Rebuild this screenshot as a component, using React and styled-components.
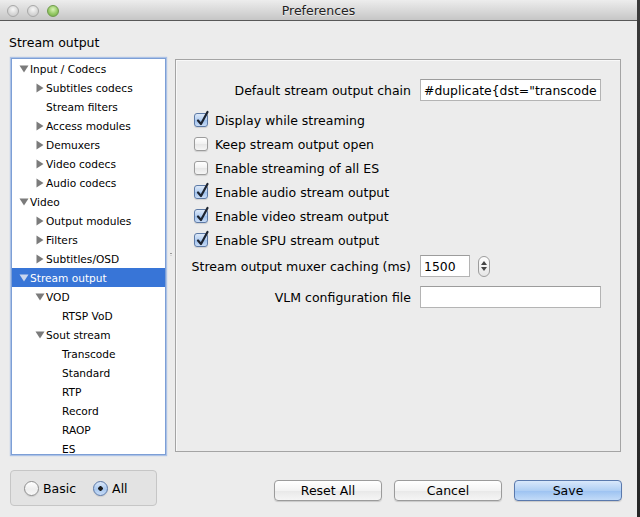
import styled, { createGlobalStyle } from 'styled-components';

const GlobalStyle = createGlobalStyle`
  html, body {
    margin: 0;
    padding: 0;
    background: #2f2f2f;
  }
  body {
    font-family: "DejaVu Sans", "Liberation Sans", sans-serif;
    color: #000;
  }
  * {
    box-sizing: border-box;
  }
`;

const Screen = styled.div`
  width: 640px;
  height: 517px;
  display: flex;
  overflow: hidden;
  background: #333;
`;

const Window = styled.div`
  width: 637px;
  height: 517px;
  flex: none;
  display: flex;
  flex-direction: column;
  background: #ececec;
`;

const TitleBar = styled.div`
  height: 21px;
  flex: none;
  display: grid;
  grid-template-columns: 1fr auto 1fr;
  align-items: center;
  background: linear-gradient(#ededed, #d6d6d6 60%, #c6c6c6);
  border-bottom: 1px solid #585858;
`;

const Lights = styled.div`
  display: flex;
  gap: 8px;
  padding-left: 7px;
  padding-top: 1px;
`;

const Light = styled.span`
  width: 12px;
  height: 12px;
  border-radius: 50%;
  border: 1px solid ${(p) => (p.$green ? '#6f9a4c' : '#a8a8a8')};
  background: ${(p) =>
    p.$green
      ? 'radial-gradient(circle at 50% 35%, #d8f3b5, #95c965 55%, #6ea843)'
      : 'radial-gradient(circle at 50% 35%, #f7f7f7, #d8d8d8 55%, #c4c4c4)'};
`;

const Title = styled.div`
  font-size: 12.5px;
  color: #222;
  text-shadow: 0 1px 0 rgba(255, 255, 255, 0.6);
`;

const Body = styled.div`
  flex: 1;
  display: flex;
  flex-direction: column;
`;

const Heading = styled.div`
  font-size: 12.5px;
  line-height: 15px;
  padding: 14px 0 0 9px;
  height: 37px;
`;

const Main = styled.div`
  display: flex;
  align-items: flex-start;
  padding-left: 11px;
  height: 398px;
`;

const Tree = styled.div`
  width: 155px;
  height: 397px;
  flex: none;
  background: #fff;
  border: 1px solid #7d9fd6;
  box-shadow: 0 0 1px 1px rgba(120, 160, 225, 0.55);
  overflow: hidden;
`;

const Splitter = styled.div`
  width: 9px;
  height: 397px;
  flex: none;
  display: flex;
  align-items: center;
  justify-content: center;
  padding-bottom: 5px;

  span {
    width: 2px;
    height: 3px;
    border-top: 1px solid #9a9a9a;
    border-bottom: 1px solid #d6d6d6;
  }
`;

const TreeRow = styled.div`
  height: 19px;
  display: flex;
  align-items: center;
  padding-left: ${(p) => 7 + p.$level * 16}px;
  font-size: 10.6px;
  white-space: nowrap;
  background: ${(p) => (p.$selected ? '#3875d7' : 'transparent')};
  color: ${(p) => (p.$selected ? '#fff' : '#000')};
`;

const ArrowSlot = styled.span`
  width: 11px;
  height: 19px;
  flex: none;
  display: flex;
  align-items: center;
`;

const Panel = styled.div`
  width: 446px;
  height: 393px;
  margin-top: 1px;
  border: 1px solid #a4a4a4;
  box-shadow: inset 1px 1px 0 #f8f8f8;
  display: flex;
  flex-direction: column;
`;

const FieldRow = styled.div`
  display: grid;
  grid-template-columns: 235px auto auto;
  justify-content: start;
  column-gap: 9px;
  align-items: center;
  height: 22px;
  margin-top: ${(p) => p.$top}px;
`;

const Label = styled.label`
  font-size: 12.5px;
  text-align: right;
  white-space: nowrap;
`;

const TextField = styled.input`
  width: ${(p) => p.$width}px;
  height: 22px;
  border: 1px solid #b4b4b4;
  border-top-color: #9c9c9c;
  background: #fff;
  font-family: "DejaVu Sans", sans-serif;
  font-size: 12.4px;
  padding: 0 3px;
  outline: none;
  color: #000;
`;

const Stepper = styled.div`
  width: 12px;
  height: 21px;
  margin-left: -1px;
  border: 1px solid #9d9d9d;
  border-radius: 6px;
  background: linear-gradient(#fdfdfd, #e6e6e6);
  display: flex;
  flex-direction: column;
  align-items: center;
  justify-content: space-around;
  padding: 3px 0;
`;

const Checks = styled.div`
  display: flex;
  flex-direction: column;
  padding-left: 18px;
  margin-top: 7px;
`;

const CheckRow = styled.div`
  height: 24px;
  display: flex;
  align-items: center;
  gap: 7px;
  font-size: 12.5px;
`;

const Box = styled.span`
  position: relative;
  width: 14px;
  height: 14px;
  flex: none;
  border-radius: 3px;
  border: 1px solid ${(p) => (p.$on ? '#5d7aa6' : '#9c9c9c')};
  background: ${(p) =>
    p.$on
      ? 'linear-gradient(#dde9f8, #b3cdef 50%, #9cbfeb 51%, #c9dcf6)'
      : 'linear-gradient(#ffffff, #f1f1f1 50%, #e6e6e6 51%, #f6f6f6)'};
  box-shadow: 0 1px 1px rgba(0, 0, 0, 0.12);

  svg {
    position: absolute;
    left: 1px;
    top: -3px;
    overflow: visible;
  }
`;

const Footer = styled.div`
  display: flex;
  align-items: flex-start;
  padding: 14px 15px 0 10px;
`;

const RadioGroup = styled.div`
  width: 147px;
  height: 36px;
  border: 1px solid #c6c6c6;
  border-radius: 4px;
  background: #e3e3e3;
  display: flex;
  align-items: center;
  padding-left: 13px;
  gap: 17px;
`;

const RadioItem = styled.div`
  display: flex;
  align-items: center;
  gap: 4px;
  font-size: 12.5px;
`;

const RadioDot = styled.span`
  width: 15px;
  height: 15px;
  border-radius: 50%;
  border: 1px solid ${(p) => (p.$on ? '#5a78a8' : '#8e8e8e')};
  background: ${(p) =>
    p.$on
      ? 'radial-gradient(circle at 50% 50%, #1c1c1c 0 2px, transparent 2.5px), linear-gradient(#dbe7f8, #a9c8ee 55%, #c7dbf6)'
      : 'linear-gradient(#ffffff, #eeeeee 55%, #f8f8f8)'};
  box-shadow: 0 1px 1px rgba(0, 0, 0, 0.1);
`;

const Buttons = styled.div`
  margin-left: auto;
  margin-top: 10px;
  display: flex;
  gap: 12px;
`;

const Button = styled.button`
  width: 108px;
  height: 21px;
  border-radius: 4px;
  border: 1px solid ${(p) => (p.$primary ? '#5a79ad' : '#9b9b9b')};
  background: ${(p) =>
    p.$primary
      ? 'linear-gradient(#d9e8fb, #b0cff4 50%, #9cc2f1 51%, #c2dbf8)'
      : 'linear-gradient(#ffffff, #f3f3f3 50%, #e8e8e8 51%, #f5f5f5)'};
  box-shadow: 0 1px 1px rgba(0, 0, 0, 0.15);
  font-family: "DejaVu Sans", sans-serif;
  font-size: 12.5px;
  color: #000;
  padding: 0;
`;

const Strip = styled.div`
  flex: 1;
  background: linear-gradient(#3a3a3a, #262626);
`;

const tree = [
  { label: 'Input / Codecs', level: 0, arrow: 'down' },
  { label: 'Subtitles codecs', level: 1, arrow: 'right' },
  { label: 'Stream filters', level: 1 },
  { label: 'Access modules', level: 1, arrow: 'right' },
  { label: 'Demuxers', level: 1, arrow: 'right' },
  { label: 'Video codecs', level: 1, arrow: 'right' },
  { label: 'Audio codecs', level: 1, arrow: 'right' },
  { label: 'Video', level: 0, arrow: 'down' },
  { label: 'Output modules', level: 1, arrow: 'right' },
  { label: 'Filters', level: 1, arrow: 'right' },
  { label: 'Subtitles/OSD', level: 1, arrow: 'right' },
  { label: 'Stream output', level: 0, arrow: 'down', selected: true },
  { label: 'VOD', level: 1, arrow: 'down' },
  { label: 'RTSP VoD', level: 2 },
  { label: 'Sout stream', level: 1, arrow: 'down' },
  { label: 'Transcode', level: 2 },
  { label: 'Standard', level: 2 },
  { label: 'RTP', level: 2 },
  { label: 'Record', level: 2 },
  { label: 'RAOP', level: 2 },
  { label: 'ES', level: 2 },
];

const checks = [
  { label: 'Display while streaming', on: true },
  { label: 'Keep stream output open', on: false },
  { label: 'Enable streaming of all ES', on: false },
  { label: 'Enable audio stream output', on: true },
  { label: 'Enable video stream output', on: true },
  { label: 'Enable SPU stream output', on: true },
];

function Arrow({ dir, light }) {
  const fill = light ? '#c9d6ee' : '#7b7b7b';
  return dir === 'down' ? (
    <svg width="10" height="8" viewBox="0 0 10 8">
      <polygon points="0.5,0.5 9.5,0.5 5,7.5" fill={fill} />
    </svg>
  ) : (
    <svg width="9" height="10" viewBox="0 0 9 10" style={{ marginLeft: 1 }}>
      <polygon points="0.5,0.5 7.5,5 0.5,9.5" fill={fill} />
    </svg>
  );
}

function Checkbox({ on }) {
  return (
    <Box $on={on}>
      {on && (
        <svg width="14" height="16" viewBox="0 0 14 16">
          <path
            d="M2 9.5 L5 13 L11.5 1"
            fill="none"
            stroke="#1d2430"
            strokeWidth="2.2"
            strokeLinecap="round"
            strokeLinejoin="round"
          />
        </svg>
      )}
    </Box>
  );
}

export default function App() {
  return (
    <Screen>
      <GlobalStyle />
      <Window>
        <TitleBar>
          <Lights>
            <Light />
            <Light />
            <Light $green />
          </Lights>
          <Title>Preferences</Title>
          <span />
        </TitleBar>
        <Body>
          <Heading>Stream output</Heading>
          <Main>
            <Tree>
              {tree.map((item) => (
                <TreeRow key={item.label} $level={item.level} $selected={item.selected}>
                  <ArrowSlot>{item.arrow && <Arrow dir={item.arrow} light={item.selected} />}</ArrowSlot>
                  {item.label}
                </TreeRow>
              ))}
            </Tree>
            <Splitter>
              <span />
            </Splitter>
            <Panel>
              <FieldRow $top={19}>
                <Label>Default stream output chain</Label>
                <TextField $width={181} readOnly defaultValue={'#duplicate{dst="transcode:{vcodec=h264}"}'} />
              </FieldRow>
              <Checks>
                {checks.map((c) => (
                  <CheckRow key={c.label}>
                    <Checkbox on={c.on} />
                    {c.label}
                  </CheckRow>
                ))}
              </Checks>
              <FieldRow $top={3}>
                <Label>Stream output muxer caching (ms)</Label>
                <TextField $width={50} readOnly defaultValue="1500" />
                <Stepper>
                  <svg width="6" height="4" viewBox="0 0 6 4">
                    <polygon points="0,4 6,4 3,0" fill="#444" />
                  </svg>
                  <svg width="6" height="4" viewBox="0 0 6 4">
                    <polygon points="0,0 6,0 3,4" fill="#444" />
                  </svg>
                </Stepper>
              </FieldRow>
              <FieldRow $top={9}>
                <Label>VLM configuration file</Label>
                <TextField $width={181} readOnly defaultValue="" />
              </FieldRow>
            </Panel>
          </Main>
          <Footer>
            <RadioGroup>
              <RadioItem>
                <RadioDot />
                Basic
              </RadioItem>
              <RadioItem>
                <RadioDot $on />
                All
              </RadioItem>
            </RadioGroup>
            <Buttons>
              <Button>Reset All</Button>
              <Button>Cancel</Button>
              <Button $primary>Save</Button>
            </Buttons>
          </Footer>
        </Body>
      </Window>
      <Strip />
    </Screen>
  );
}
